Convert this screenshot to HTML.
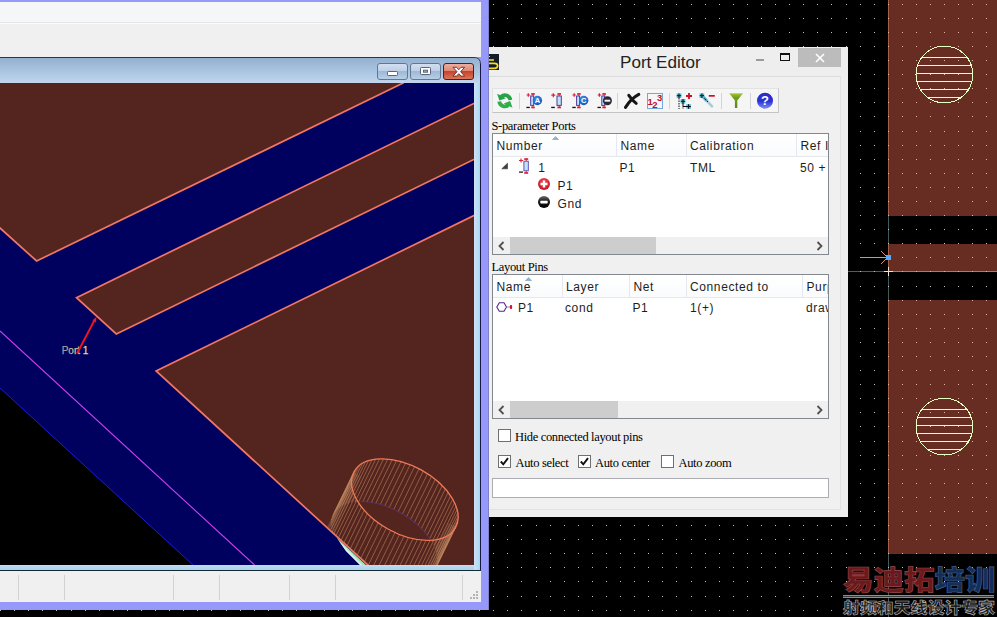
<!DOCTYPE html>
<html lang="en">
<head>
<meta charset="utf-8">
<title>Port Editor</title>
<style>
html,body{margin:0;padding:0;}
body{width:997px;height:617px;overflow:hidden;background:#000;position:relative;font-family:"Liberation Sans",sans-serif;}
.abs{position:absolute;}
#bg{position:absolute;left:0;top:0;width:997px;height:617px;}
/* ---------- left main window ---------- */
#mainwin{position:absolute;left:0;top:0;width:489px;height:610px;background:#9698fa;box-sizing:border-box;border-right:1px solid #7e80c8;}
#menubar{position:absolute;left:0;top:2px;width:481px;height:20px;background:#f5f6f7;}
#menuline{position:absolute;left:0;top:22px;width:481px;height:1px;background:#e6e6e6;}
#menuline2{position:absolute;left:0;top:23px;width:481px;height:1px;background:#fbfbfb;}
#toolarea{position:absolute;left:0;top:24px;width:481px;height:33px;background:#f0f0f0;}
#child{position:absolute;left:0;top:57px;width:481px;height:514px;background:#b4cfe8;border-top-right-radius:7px;}
#childtitle{position:absolute;left:0;top:58px;width:480px;height:25px;background:linear-gradient(#94b1cf 0%,#a6c2de 45%,#b6cfe9 80%,#c6d3ec 100%);border-top-right-radius:6px;}
#canvas{position:absolute;left:0;top:83px;width:474px;height:482px;}
#status{position:absolute;left:0;top:571px;width:481px;height:31px;background:#f0f0f0;}
.ssep{position:absolute;top:4px;width:1px;height:25px;background:#d2d2d2;}
/* ---------- port editor ---------- */
#pe{position:absolute;left:489px;top:47px;width:359px;height:470px;background:#eeeeee;}
.serif{font-family:"Liberation Serif","Noto Serif CJK TC",serif;font-size:12.5px;letter-spacing:-0.34px;color:#000;white-space:nowrap;}
.ui{font-family:"Liberation Sans",sans-serif;font-size:12px;letter-spacing:0.62px;color:#1e1e1e;white-space:nowrap;}
.list{position:absolute;background:#fff;border:1px solid #828790;box-sizing:border-box;overflow:hidden;}
.hsep{position:absolute;top:0;width:1px;height:22px;background:#e5e8ee;}
.cb{position:absolute;width:13px;height:13px;box-sizing:border-box;border:1px solid #707070;background:#fff;}
</style>
</head>
<body>
<!-- ================= layout background (right) ================= -->
<svg id="bg" width="997" height="617" viewBox="0 0 997 617" shape-rendering="crispEdges">
<defs><g id="dr"><rect x="0" width="1" height="1"/><rect x="14" width="1" height="1"/><rect x="28" width="1" height="1"/><rect x="42" width="1" height="1"/><rect x="56" width="1" height="1"/><rect x="71" width="1" height="1"/><rect x="85" width="1" height="1"/><rect x="99" width="1" height="1"/><rect x="113" width="1" height="1"/><rect x="127" width="1" height="1"/><rect x="141" width="1" height="1"/><rect x="155" width="1" height="1"/><rect x="169" width="1" height="1"/><rect x="183" width="1" height="1"/><rect x="197" width="1" height="1"/><rect x="211" width="1" height="1"/><rect x="226" width="1" height="1"/><rect x="240" width="1" height="1"/><rect x="254" width="1" height="1"/><rect x="268" width="1" height="1"/><rect x="282" width="1" height="1"/><rect x="296" width="1" height="1"/><rect x="310" width="1" height="1"/><rect x="324" width="1" height="1"/><rect x="338" width="1" height="1"/><rect x="352" width="1" height="1"/><rect x="366" width="1" height="1"/><rect x="381" width="1" height="1"/><rect x="395" width="1" height="1"/><rect x="409" width="1" height="1"/><rect x="423" width="1" height="1"/><rect x="437" width="1" height="1"/><rect x="451" width="1" height="1"/><rect x="465" width="1" height="1"/><rect x="479" width="1" height="1"/><rect x="493" width="1" height="1"/><rect x="507" width="1" height="1"/><rect x="521" width="1" height="1"/><rect x="536" width="1" height="1"/><rect x="550" width="1" height="1"/><rect x="564" width="1" height="1"/><rect x="578" width="1" height="1"/><rect x="592" width="1" height="1"/><rect x="606" width="1" height="1"/><rect x="620" width="1" height="1"/><rect x="634" width="1" height="1"/><rect x="648" width="1" height="1"/><rect x="662" width="1" height="1"/><rect x="676" width="1" height="1"/><rect x="691" width="1" height="1"/><rect x="705" width="1" height="1"/><rect x="719" width="1" height="1"/><rect x="733" width="1" height="1"/><rect x="747" width="1" height="1"/><rect x="761" width="1" height="1"/><rect x="775" width="1" height="1"/><rect x="789" width="1" height="1"/><rect x="803" width="1" height="1"/><rect x="817" width="1" height="1"/><rect x="831" width="1" height="1"/><rect x="846" width="1" height="1"/><rect x="860" width="1" height="1"/><rect x="874" width="1" height="1"/><rect x="888" width="1" height="1"/><rect x="902" width="1" height="1"/><rect x="916" width="1" height="1"/><rect x="930" width="1" height="1"/><rect x="944" width="1" height="1"/><rect x="958" width="1" height="1"/><rect x="972" width="1" height="1"/><rect x="986" width="1" height="1"/></g><g id="dg"><use href="#dr" y="4"/><use href="#dr" y="18"/><use href="#dr" y="32"/><use href="#dr" y="46"/><use href="#dr" y="60"/><use href="#dr" y="74"/><use href="#dr" y="88"/><use href="#dr" y="102"/><use href="#dr" y="116"/><use href="#dr" y="131"/><use href="#dr" y="145"/><use href="#dr" y="159"/><use href="#dr" y="173"/><use href="#dr" y="187"/><use href="#dr" y="201"/><use href="#dr" y="215"/><use href="#dr" y="229"/><use href="#dr" y="243"/><use href="#dr" y="257"/><use href="#dr" y="271"/><use href="#dr" y="286"/><use href="#dr" y="300"/><use href="#dr" y="314"/><use href="#dr" y="328"/><use href="#dr" y="342"/><use href="#dr" y="356"/><use href="#dr" y="370"/><use href="#dr" y="384"/><use href="#dr" y="398"/><use href="#dr" y="412"/><use href="#dr" y="426"/><use href="#dr" y="441"/><use href="#dr" y="455"/><use href="#dr" y="469"/><use href="#dr" y="483"/><use href="#dr" y="497"/><use href="#dr" y="511"/><use href="#dr" y="525"/><use href="#dr" y="539"/><use href="#dr" y="553"/><use href="#dr" y="567"/><use href="#dr" y="581"/><use href="#dr" y="596"/><use href="#dr" y="610"/></g></defs>
<rect x="0" y="0" width="997" height="617" fill="#000"/>
<rect x="888" y="0" width="1" height="617" fill="#425a58"/>
<rect x="489" y="271" width="508" height="1" fill="#46605c"/>
<g fill="#c6c6c6"><use href="#dg"/></g>
<g id="brown" fill="#672d22">
<rect x="888" y="0" width="109" height="216"/>
<rect x="888" y="244" width="109" height="28"/>
<rect x="888" y="300" width="109" height="254"/>
</g>
<clipPath id="cb"><rect x="888" y="0" width="109" height="216"/><rect x="888" y="244" width="109" height="28"/><rect x="888" y="300" width="109" height="254"/></clipPath>
<g clip-path="url(#cb)"><rect x="888" y="0" width="1" height="617" fill="#a5604c"/><rect x="888" y="271" width="109" height="1" fill="#b07868"/></g>
<g fill="#e2b6a6" clip-path="url(#cb)"><use href="#dg"/></g>
<!-- axes -->
<!-- origin cross -->
<rect x="884" y="271" width="9" height="1" fill="#f0e6dc"/><rect x="888" y="267" width="1" height="9" fill="#f0e0d0"/>
<!-- via circles -->
<g fill="none" stroke="#e6ffc2" stroke-width="1" shape-rendering="crispEdges">
<circle cx="944.4" cy="74.5" r="28.4"/>
<circle cx="944.4" cy="426.6" r="28.4"/>
</g>
<g fill="#e6ffc2">
<rect x="922" y="57" width="45" height="1"/><rect x="918" y="65" width="53" height="1"/><rect x="916" y="73" width="57" height="1"/><rect x="917" y="81" width="55" height="1"/><rect x="920" y="89" width="49" height="1"/><rect x="928" y="97" width="33" height="1"/>
<rect x="922" y="409" width="45" height="1"/><rect x="918" y="417" width="53" height="1"/><rect x="916" y="425" width="57" height="1"/><rect x="917" y="433" width="55" height="1"/><rect x="920" y="441" width="49" height="1"/><rect x="928" y="449" width="33" height="1"/>
</g>
<!-- port pin arrow -->
<g shape-rendering="auto">
<line x1="860" y1="257.5" x2="887" y2="257.5" stroke="#e2907a" stroke-width="1"/>
<line x1="881" y1="251" x2="887" y2="257" stroke="#e2907a" stroke-width="1"/>
<line x1="881" y1="264" x2="887" y2="258" stroke="#e2907a" stroke-width="1"/>
</g>
<rect x="886" y="255" width="5" height="5" fill="#55aaff"/>
</svg>

<!-- ================= main window (left) ================= -->
<div id="mainwin">
  <div id="menubar"></div><div id="menuline"></div><div id="menuline2"></div>
  <div id="toolarea"></div>
  <div id="child"></div>
  <div id="childtitle"></div>
  <svg id="canvas" width="474" height="482" viewBox="0 83 474 482">
    <rect x="0" y="83" width="474" height="482" fill="#00005f"/>
    <!-- ground / black corner -->
    <polygon points="0,388 193,565 0,565" fill="#000"/>
    <line x1="0" y1="388" x2="193" y2="565" stroke="#1c1cd8" stroke-width="1"/>
    <line x1="0" y1="331" x2="254.5" y2="565" stroke="#cf3ff0" stroke-width="1.1"/>
    <!-- copper polygons -->
    <g fill="#54251e" stroke="#f27664" stroke-width="1.7" stroke-linejoin="miter">
      <polygon points="-5,78 403.2,78 403.2,83 36.6,261 -5,223.5"/>
      <polygon points="480,100.4 76.5,297.7 116.3,334 480,156.5"/>
      <polygon points="480,212.6 156.1,371 369.500,566.5 480,566.5"/>
    </g>
    <clipPath id="cc"><polygon points="480,212.6 156.1,371 369.500,566.5 480,566.5"/></clipPath>
    <g clip-path="url(#cc)"><polygon points="456.0,526.7 426.8,586.6 418.7,582.7 447.9,522.8" fill="#b08a68" fill-opacity="0.12"/><polygon points="456.0,526.7 426.8,586.6 422.3,584.4 451.5,524.5" fill="#b08a68" fill-opacity="0.12"/><polygon points="456.0,526.7 426.8,586.6 424.6,585.5 453.7,525.6" fill="#b08a68" fill-opacity="0.10"/><polygon points="353.6,472.5 324.5,532.4 332.6,536.4 361.7,476.4" fill="#b08a68" fill-opacity="0.12"/><polygon points="353.6,472.5 324.5,532.4 329.0,534.6 358.1,474.7" fill="#b08a68" fill-opacity="0.12"/><polygon points="353.6,472.5 324.5,532.4 326.8,533.5 355.9,473.6" fill="#b08a68" fill-opacity="0.10"/><path d="M455.5 527.6l-20.8 42.8M453.9 530.0l-20.8 42.8M452.0 532.2l-20.8 42.8M449.7 534.2l-20.8 42.8M447.1 535.9l-20.8 42.8M444.2 537.3l-20.8 42.8M441.1 538.5l-20.8 42.8M437.6 539.4l-20.8 42.8M433.9 540.0l-20.8 42.8M430.1 540.3l-20.8 42.8M426.0 540.4l-20.8 42.8M421.8 540.1l-20.8 42.8M417.4 539.5l-20.8 42.8M413.0 538.7l-20.8 42.8M408.5 537.6l-20.8 42.8M404.0 536.2l-20.8 42.8M399.5 534.5l-20.8 42.8M395.0 532.6l-20.8 42.8M390.6 530.4l-20.8 42.8M386.3 528.1l-20.8 42.8M382.1 525.5l-20.8 42.8M378.1 522.7l-20.8 42.8M374.3 519.8l-20.8 42.8M370.7 516.7l-20.8 42.8M367.4 513.5l-20.8 42.8M364.3 510.2l-20.8 42.8M361.5 506.8l-20.8 42.8M359.0 503.4l-20.8 42.8M356.9 499.9l-20.8 42.8M355.1 496.5l-20.8 42.8M353.6 493.0l-20.8 42.8M352.6 489.6l-20.8 42.8M351.9 486.3l-20.8 42.8M351.5 483.1l-20.8 42.8M351.6 480.0l-20.8 42.8M352.1 477.0l-20.8 42.8M352.9 474.2l-20.8 42.8M354.1 471.6l-20.8 42.8M355.7 469.2l-20.8 42.8M357.6 467.0l-20.8 42.8M359.9 465.0l-20.8 42.8M362.5 463.3l-20.8 42.8M365.4 461.9l-20.8 42.8M368.5 460.7l-20.8 42.8M372.0 459.8l-20.8 42.8M375.7 459.2l-20.8 42.8M379.5 458.9l-20.8 42.8M383.6 458.8l-20.8 42.8M387.8 459.1l-20.8 42.8M392.2 459.7l-20.8 42.8M396.6 460.5l-20.8 42.8M401.1 461.6l-20.8 42.8M405.6 463.0l-20.8 42.8M410.1 464.7l-20.8 42.8M414.6 466.6l-20.8 42.8M419.0 468.8l-20.8 42.8M423.3 471.1l-20.8 42.8M427.5 473.7l-20.8 42.8M431.5 476.5l-20.8 42.8M435.3 479.4l-20.8 42.8M438.9 482.5l-20.8 42.8M442.2 485.7l-20.8 42.8M445.3 489.0l-20.8 42.8M448.1 492.4l-20.8 42.8M450.6 495.8l-20.8 42.8M452.7 499.3l-20.8 42.8M454.5 502.7l-20.8 42.8M456.0 506.2l-20.8 42.8M457.0 509.6l-20.8 42.8M457.7 512.9l-20.8 42.8M458.1 516.1l-20.8 42.8M458.0 519.2l-20.8 42.8M457.5 522.2l-20.8 42.8M456.7 525.0l-20.8 42.8" stroke="#c58a62" stroke-opacity="0.62" stroke-width="0.9" fill="none"/></g><clipPath id="ce"><ellipse cx="404.8" cy="499.6" rx="56.9" ry="32.9" transform="rotate(28.9 404.8 499.6)"/></clipPath><g clip-path="url(#ce)"><ellipse cx="384.0" cy="542.4" rx="57.9" ry="33.9" transform="rotate(28.9 384.0 542.4)" fill="none" stroke="#5a3a96" stroke-opacity="0.5" stroke-width="1"/></g><polygon points="336.5,537.5 367,566 361,566 346,551" fill="#a8e4b4"/><polygon points="339,541 363,566 361,566 346,551" fill="#e4f2ec"/><ellipse cx="404.8" cy="499.6" rx="57.9" ry="33.9" transform="rotate(28.9 404.8 499.6)" fill="none" stroke="#f07858" stroke-width="1.3"/>
    <!-- port arrow + label -->
    <defs><linearGradient id="pg" x1="0" y1="0" x2="1" y2="0"><stop offset="0" stop-color="#8f90a6"/><stop offset="0.45" stop-color="#c4c49a"/><stop offset="1" stop-color="#eaea86"/></linearGradient></defs>
    <text x="61.700" y="354.300" font-family="Liberation Sans, sans-serif" font-size="10" fill="url(#pg)" stroke="url(#pg)" stroke-width="0.250">Port 1</text>
    <line x1="77" y1="353.500" x2="95" y2="319.200" stroke="#f01424" stroke-width="1.900"/>
    <polygon points="96.500,316.800 92.400,320.500 96,322.600" fill="#f01424"/>
  </svg>
  <div id="childdark" class="abs" style="left:0;top:57px;width:474px;height:1px;background:#2e3440;"></div>
  <svg class="abs" style="left:370px;top:57px;" width="112" height="30" viewBox="370 57 112 30">
    <defs>
      <linearGradient id="gb" x1="0" y1="0" x2="0" y2="1"><stop offset="0" stop-color="#d3e1f1"/><stop offset="0.48" stop-color="#bccfe6"/><stop offset="0.5" stop-color="#9fb8d6"/><stop offset="1" stop-color="#b9d0e8"/></linearGradient>
      <linearGradient id="gr" x1="0" y1="0" x2="0" y2="1"><stop offset="0" stop-color="#eeb0a2"/><stop offset="0.48" stop-color="#dc8672"/><stop offset="0.5" stop-color="#c7432b"/><stop offset="1" stop-color="#dd7a5e"/></linearGradient>
    </defs>
    <path d="M474 57.5 Q480.5 57.5 480.5 64 L480.5 87" fill="none" stroke="#2e3440" stroke-width="1"/>
    <rect x="377.500" y="63.500" width="30" height="16" rx="2.500" fill="url(#gb)" stroke="#64768f"/>
    <rect x="410.500" y="63.500" width="30" height="16" rx="2.500" fill="url(#gb)" stroke="#64768f"/>
    <rect x="443.500" y="63.500" width="30" height="16" rx="2.500" fill="url(#gr)" stroke="#4a2024"/>
    <rect x="387.500" y="71.500" width="10" height="4" rx="0.800" fill="#fff" stroke="#5a6478"/>
    <rect x="420.500" y="67.500" width="10" height="7" rx="0.800" fill="#fff" stroke="#5a6478"/><rect x="423.500" y="70.200" width="4" height="2" fill="#9fb4d0" stroke="#5a6478"/>
    <path d="M453 67.300 l3.600 0 l2.200 2.400 l2.200 -2.400 l3.600 0 l-4 4.400 l4 4.400 l-3.600 0 l-2.200 -2.400 l-2.200 2.400 l-3.600 0 l4 -4.400 z" fill="#fff" stroke="#5c2c2c" stroke-width="0.900"/>
  </svg>
  <div class="abs" style="left:0;top:565px;width:480px;height:5px;background:linear-gradient(#c4dcf2,#b4d4ee 60%,#a4d8f2);"></div>
  <div class="abs" style="left:474px;top:83px;width:6px;height:487px;background:linear-gradient(to right,#d0e0f6,#c2dcf2 50%,#98dcf8);"></div>
  
  <div class="abs" style="left:480px;top:64px;width:1px;height:507px;background:#181844;"></div>
  <div class="abs" style="left:0;top:570px;width:481px;height:1px;background:#102a36;"></div>
  <div id="status">
    <div class="ssep" style="left:18px"></div><div class="ssep" style="left:64px"></div><div class="ssep" style="left:173px"></div><div class="ssep" style="left:219px"></div><div class="ssep" style="left:289px"></div><div class="ssep" style="left:335px"></div><div class="ssep" style="left:462px"></div>
    <svg class="abs" style="left:468px;top:18px" width="12" height="12" shape-rendering="crispEdges"><g fill="#b4b4b4"><rect x="8" y="2" width="2" height="2"/><rect x="5" y="5" width="2" height="2"/><rect x="8" y="5" width="2" height="2"/><rect x="2" y="8" width="2" height="2"/><rect x="5" y="8" width="2" height="2"/><rect x="8" y="8" width="2" height="2"/></g></svg>
  </div>
</div>

<!-- ================= Port Editor ================= -->
<div id="pe">
  <!-- title bar -->
  <svg class="abs" style="left:0;top:7px" width="10" height="16" viewBox="0 0 10 16">
    <rect width="10" height="16" fill="#161c28"/>
    <path d="M0 6 H5" stroke="#f4dc28" stroke-width="1.6" fill="none"/>
    <path d="M0 9.300 H5.500 Q8.600 9.300 8.600 11.800 Q8.600 14.300 5.500 14.300 H0" stroke="#f4dc28" stroke-width="1.7" fill="none"/>
    <rect x="0" y="2" width="1" height="1" fill="#f4dc28"/>
  </svg>
  <div id="petitle" class="abs" style="left:131px;top:5px;font-size:17.1px;line-height:22px;color:#222222;white-space:nowrap;">Port Editor</div>
  <div class="abs" style="left:267px;top:12px;width:8px;height:2px;background:#9b9b9b;"></div>
  <div class="abs" style="left:291px;top:6px;width:10px;height:8px;box-sizing:border-box;border:1px solid #111;border-top-width:2px;"></div>
  <div class="abs" style="left:309px;top:1px;width:43px;height:19px;background:#bcbcbc;"></div>
  <svg class="abs" style="left:326px;top:6px" width="10" height="10" viewBox="0 0 10 10"><path d="M1 1 L9 9 M9 1 L1 9" stroke="#fff" stroke-width="1.6" fill="none"/></svg>
  <div class="abs" style="left:0;top:29px;width:352px;height:1px;background:#dcdcdc;"></div>
  <!-- client -->
  <div id="client" class="abs" style="left:0;top:30px;width:351px;height:432px;background:#f0f0f0;border-right:1px solid #e2e2e2;border-bottom:1px solid #e2e2e2;"></div>
  <!-- toolbar -->
  <div id="tb" class="abs" style="left:3px;top:41px;width:287px;height:25px;box-sizing:border-box;background:#f5f5f5;border:1px solid #e3e3e3;border-right-color:#c9c9c9;border-bottom-color:#c4c4c4;"></div>
  <svg class="abs" style="left:3px;top:41px" width="287" height="25" viewBox="492 88 287 25">
    <defs>
      <g id="pt"><!-- port symbol, origin at rect centre -->
        <rect x="-2" y="-4.700" width="4.300" height="9.400" fill="#c4e2f8" stroke="#4b3a9c" stroke-width="1"/>
        <rect x="-1.600" y="-7.600" width="3.600" height="1.700" fill="#d8203c"/><rect x="-0.300" y="-6.500" width="1" height="1.800" fill="#d8203c"/>
        <rect x="-1.600" y="5.900" width="3.600" height="1.700" fill="#d8203c"/><rect x="-0.300" y="4.700" width="1" height="1.800" fill="#d8203c"/>
        <path d="M-7.700 -5.500 H-3.700 M-5.700 -7.500 V-3.500" stroke="#d8203c" stroke-width="1.200"/>
        <rect x="-7.800" y="6.100" width="3.600" height="1.300" fill="#111"/>
      </g>
      <g id="pn">
        <rect x="-1.500" y="-4.700" width="3" height="9.400" fill="#c4e2f8" stroke="#4b3a9c" stroke-width="1"/>
        <rect x="-1" y="-7.600" width="3.600" height="1.700" fill="#d8203c"/><rect x="0.300" y="-6.500" width="1" height="1.800" fill="#d8203c"/>
        <rect x="-1" y="5.900" width="3.600" height="1.700" fill="#d8203c"/><rect x="0.300" y="4.700" width="1" height="1.800" fill="#d8203c"/>
        <path d="M-5.600 -5.700 H-2.200 M-3.900 -7.400 V-4" stroke="#d8203c" stroke-width="1.200"/>
        <rect x="-5.800" y="6.100" width="3.400" height="1.300" fill="#111"/>
      </g>
      <radialGradient id="bl" cx="0.400" cy="0.300" r="0.800"><stop offset="0" stop-color="#3f8fe8"/><stop offset="1" stop-color="#0a4fb4"/></radialGradient>
      <linearGradient id="hp" x1="0" y1="0" x2="0" y2="1"><stop offset="0" stop-color="#2a2ac8"/><stop offset="0.550" stop-color="#2c34d6"/><stop offset="1" stop-color="#7f92f4"/></linearGradient>
      <linearGradient id="fn" x1="0" y1="0" x2="0" y2="1"><stop offset="0" stop-color="#a6c82a"/><stop offset="0.300" stop-color="#6f9e1c"/><stop offset="1" stop-color="#5a8a18"/></linearGradient>
    </defs>
    <!-- refresh -->
    <path d="M512.23 99.76 A7.50 7.50 0 0 0 500.18 94.89 L502.52 97.88 A3.70 3.70 0 0 1 508.46 100.29 Z M497.1 93.8 L499.4 100.6 L505.9 98.2 Z" fill="#27a244"/>
    <g transform="rotate(180 504.80 100.80)"><path d="M512.23 99.76 A7.50 7.50 0 0 0 500.18 94.89 L502.52 97.88 A3.70 3.70 0 0 1 508.46 100.29 Z M497.1 93.8 L499.4 100.6 L505.9 98.2 Z" fill="#2fae4c"/></g>
    <!-- separators -->
    <g fill="#d4d4d4"><rect x="519" y="93" width="1" height="16"/><rect x="617" y="93" width="1" height="16"/><rect x="669" y="93" width="1" height="16"/><rect x="721" y="93" width="1" height="16"/><rect x="750" y="93" width="1" height="16"/></g>
    <!-- port icons -->
    <use href="#pn" x="532.200" y="100.700"/>
    <circle cx="537.400" cy="100.500" r="4.700" fill="url(#bl)"/>
    <text x="537.400" y="103.200" font-family="Liberation Sans, sans-serif" font-size="7.500" font-weight="bold" fill="#fff" text-anchor="middle">A</text>
    <use href="#pt" x="559" y="100.700"/>
    <use href="#pn" x="578.100" y="100.700"/>
    <circle cx="583.700" cy="100.500" r="4.700" fill="url(#bl)"/>
    <text x="583.800" y="103.200" font-family="Liberation Sans, sans-serif" font-size="7.500" font-weight="bold" fill="#fff" text-anchor="middle">C</text>
    <use href="#pn" x="603.300" y="100.700"/>
    <circle cx="607.400" cy="100.700" r="4.500" fill="#2a2a34"/><rect x="604.600" y="99.700" width="5.600" height="2" fill="#f4f4f4"/>
    <!-- delete X -->
    <path d="M625.500 107.400 Q631 98.500 638.800 94.400" stroke="#151515" stroke-width="3" stroke-linecap="round" fill="none"/>
    <path d="M628.800 95.300 Q632 100 636.200 103.400" stroke="#151515" stroke-width="3" stroke-linecap="round" fill="none"/>
    <!-- 123 -->
    <rect x="647.500" y="93.500" width="15" height="15" fill="#f6f6f6" stroke="#73a8dc" stroke-width="1"/>
    <g font-family="Liberation Sans, sans-serif" font-weight="bold" fill="#c40c28" font-size="9.500">
      <text x="647.600" y="105">1</text><text x="652.200" y="108">2</text><text x="657" y="101">3</text>
    </g>
    <!-- tree + -->
    <g fill="#4fc0dc"><rect x="676.700" y="93.400" width="4.600" height="4.600"/><rect x="680.700" y="99" width="4.600" height="4.600"/><rect x="686.300" y="104.200" width="4.600" height="4.600"/></g>
    <g stroke="#0a0a14" stroke-width="1" fill="none">
      <path d="M679 93.500 V98 M676.800 95.700 H681.200 M683 99 V104 M680.800 101.300 H685.200 M688.600 104.200 V108.800 M686.400 106.500 H690.800"/>
      <path d="M679 98 V109" stroke-dasharray="1.500 1"/><path d="M683 103.500 V106.500 H687"/><path d="M683 106.500 V109" stroke-dasharray="1 1"/>
    </g>
    <path d="M686 96 H692 M689 93 V99" stroke="#c8102c" stroke-width="1.800"/>
    <!-- tree - -->
    <path d="M702 95.700 L712 106.300" stroke="#9cc4d0" stroke-width="2.600" stroke-linecap="round" opacity="0.850"/>
    <path d="M702 95.700 L707 101" stroke="#3fb4d4" stroke-width="2.800"/>
    <rect x="699.600" y="93.400" width="4.600" height="4.600" fill="#4fc0dc"/>
    <path d="M701.900 93.500 V98 M699.700 95.700 H704.100" stroke="#0a0a14" stroke-width="1"/>
    <path d="M704.400 98.300 l1.600 1.600 M706.800 100.800 l1.200 1.200" stroke="#0a0a14" stroke-width="0.900"/>
    <rect x="708.800" y="95" width="6" height="1.700" fill="#c8102c"/>
    <!-- funnel -->
    <path d="M729.200 93.200 H743 L737.300 100.400 V108 H734.900 V100.400 Z" fill="url(#fn)"/>
    <path d="M729.700 93.600 H742.500" stroke="#c4dc5a" stroke-width="0.800"/>
    <!-- help -->
    <circle cx="765" cy="100.700" r="8" fill="url(#hp)"/>
    <text x="765" y="105.300" font-family="Liberation Sans, sans-serif" font-size="13" font-weight="bold" fill="#fff" text-anchor="middle">?</text>
  </svg>
  <!-- S-parameter ports -->
  <div id="lab1" class="abs serif" style="left:2.5px;top:71.5px;line-height:14px;">S-parameter Ports</div>
  <div id="list1" class="list" style="left:3px;top:86px;width:337px;height:122px;">
    <div class="abs" style="left:0;top:0;width:335px;height:22px;background:linear-gradient(#ffffff,#fafbfd);border-bottom:1px solid #e6e8ec;"></div>
    <div class="hsep" style="left:123px"></div><div class="hsep" style="left:193px"></div><div class="hsep" style="left:303px"></div>
    <svg class="abs" style="left:59px;top:1.500px" width="7" height="4" viewBox="0 0 7 4"><path d="M0.300 3.800 L3.500 0.400 L6.700 3.800 Z" fill="#8fb4c4" stroke="#6f9fb4" stroke-width="0.500"/></svg>
    <div class="abs ui" style="left:3.5px;top:3.8px;line-height:16px;">Number</div>
    <div class="abs ui" style="left:127.5px;top:3.8px;line-height:16px;">Name</div>
    <div class="abs ui" style="left:197px;top:3.8px;line-height:16px;">Calibration</div>
    <div class="abs ui" style="left:307.5px;top:3.8px;line-height:16px;">Ref Impedance</div>
    <!-- row 1 -->
    <svg class="abs" style="left:8px;top:28px" width="8" height="8" viewBox="0 0 8 8"><path d="M0.800 6.800 L6.500 6.800 L6.500 1.200 Z" fill="#404040" stroke="#303030" stroke-width="0.6"/></svg>
    <svg class="abs" style="left:23px;top:23px" width="16" height="18" viewBox="0 0 16 18">
      <rect x="7.900" y="4.200" width="4.400" height="9.600" fill="#c2e2f8" stroke="#5444ac" stroke-width="0.900"/>
      <rect x="8.200" y="1.200" width="4" height="1.700" fill="#d8203c"/><rect x="9.700" y="2" width="1" height="2" fill="#d8203c"/>
      <rect x="8.200" y="15.100" width="4" height="1.700" fill="#d8203c"/><rect x="9.700" y="14" width="1" height="2" fill="#d8203c"/>
      <path d="M3 3.500 H7 M5 1.500 V5.500" stroke="#d8203c" stroke-width="1.100"/>
      <rect x="3" y="14.500" width="4" height="1.200" fill="#111"/>
    </svg>
    <div class="abs ui" style="left:45.2px;top:25.8px;line-height:16px;">1</div>
    <div class="abs ui" style="left:126.5px;top:25.8px;line-height:16px;">P1</div>
    <div class="abs ui" style="left:197px;top:25.8px;line-height:16px;">TML</div>
    <div class="abs ui" style="left:307px;top:25.8px;line-height:16px;">50 + 0j</div>
    <!-- row 2 -->
    <svg class="abs" style="left:44px;top:43px" width="14" height="14" viewBox="0 0 14 14">
      <defs><radialGradient id="rg1" cx="0.5" cy="0.300" r="0.700"><stop offset="0" stop-color="#ee4a52"/><stop offset="1" stop-color="#c41424"/></radialGradient></defs>
      <circle cx="7" cy="7" r="6" fill="url(#rg1)"/><path d="M3.500 7 H10.500 M7 3.500 V10.500" stroke="#fff" stroke-width="2.400"/></svg>
    <div class="abs ui" style="left:64.5px;top:43.8px;line-height:16px;">P1</div>
    <!-- row 3 -->
    <svg class="abs" style="left:44px;top:61px" width="14" height="14" viewBox="0 0 14 14">
      <defs><linearGradient id="lg2" x1="0" y1="0" x2="0" y2="1"><stop offset="0" stop-color="#6a6a6a"/><stop offset="0.450" stop-color="#1a1a1a"/><stop offset="1" stop-color="#000"/></linearGradient></defs>
      <circle cx="7" cy="7" r="6" fill="url(#lg2)"/><rect x="3.300" y="5.800" width="7.400" height="2.600" rx="0.600" fill="#fff"/></svg>
    <div class="abs ui" style="left:64.5px;top:61.8px;line-height:16px;">Gnd</div>
    <!-- scrollbar -->
    <div class="abs" style="left:0;top:103px;width:335px;height:17px;background:#f0f0f0;"></div>
    <div class="abs" style="left:17px;top:103px;width:146px;height:17px;background:#cdcdcd;"></div>
    <svg class="abs" style="left:4px;top:107px" width="9" height="10" viewBox="0 0 9 10"><path d="M6.500 1 L2.500 5 L6.500 9" stroke="#505050" stroke-width="1.800" fill="none"/></svg>
    <svg class="abs" style="left:322px;top:107px" width="9" height="10" viewBox="0 0 9 10"><path d="M2.500 1 L6.500 5 L2.500 9" stroke="#505050" stroke-width="1.800" fill="none"/></svg>
  </div>
  <!-- Layout pins -->
  <div id="lab2" class="abs serif" style="left:2.500px;top:212.5px;line-height:14px;">Layout Pins</div>
  <div id="list2" class="list" style="left:3px;top:227px;width:337px;height:145px;">
    <div class="abs" style="left:0;top:0;width:335px;height:22px;background:linear-gradient(#ffffff,#fafbfd);border-bottom:1px solid #e6e8ec;"></div>
    <div class="hsep" style="left:69px"></div><div class="hsep" style="left:136px"></div><div class="hsep" style="left:193px"></div><div class="hsep" style="left:309px"></div>
    <svg class="abs" style="left:32px;top:1.500px" width="7" height="4" viewBox="0 0 7 4"><path d="M0.300 3.800 L3.500 0.400 L6.700 3.800 Z" fill="#8fb4c4" stroke="#6f9fb4" stroke-width="0.500"/></svg>
    <div class="abs ui" style="left:3.5px;top:3.8px;line-height:16px;">Name</div>
    <div class="abs ui" style="left:73px;top:3.8px;line-height:16px;">Layer</div>
    <div class="abs ui" style="left:140.5px;top:3.8px;line-height:16px;">Net</div>
    <div class="abs ui" style="left:197px;top:3.8px;line-height:16px;">Connected to</div>
    <div class="abs ui" style="left:313.5px;top:3.8px;line-height:16px;">Purpose</div>
    <svg class="abs" style="left:3px;top:26px" width="18" height="12" viewBox="0 0 18 12">
      <path d="M0.800 6 L3.300 1.700 H8 L10.500 6 L8 10.300 H3.300 Z" fill="#fff" stroke="#52288a" stroke-width="1.100"/>
      <path d="M10.800 6 H14.500" stroke="#c49ad0" stroke-width="1.300"/><rect x="13.900" y="4" width="2.200" height="4" rx="0.800" fill="#cc1830"/></svg>
    <div class="abs ui" style="left:25px;top:24.8px;line-height:16px;">P1</div>
    <div class="abs ui" style="left:72px;top:24.8px;line-height:16px;">cond</div>
    <div class="abs ui" style="left:139.5px;top:24.8px;line-height:16px;">P1</div>
    <div class="abs ui" style="left:197px;top:24.8px;line-height:16px;">1(+)</div>
    <div class="abs ui" style="left:313px;top:24.8px;line-height:16px;">drawing</div>
    <div class="abs" style="left:0;top:126px;width:335px;height:17px;background:#f0f0f0;"></div>
    <div class="abs" style="left:17px;top:126px;width:108px;height:17px;background:#cdcdcd;"></div>
    <svg class="abs" style="left:4px;top:130px" width="9" height="10" viewBox="0 0 9 10"><path d="M6.500 1 L2.500 5 L6.500 9" stroke="#505050" stroke-width="1.800" fill="none"/></svg>
    <svg class="abs" style="left:322px;top:130px" width="9" height="10" viewBox="0 0 9 10"><path d="M2.500 1 L6.500 5 L2.500 9" stroke="#505050" stroke-width="1.800" fill="none"/></svg>
  </div>
  <!-- check boxes -->
  <div class="cb" style="left:9px;top:382px;"></div>
  <div id="lab3" class="abs serif" style="left:26px;top:382.5px;line-height:14px;">Hide connected layout pins</div>
  <div class="cb" style="left:9px;top:408px;"></div>
  <svg class="abs" style="left:9px;top:408px" width="13" height="13" viewBox="0 0 13 13"><path d="M2.800 6.500 L5.300 9.300 L10 3.200" stroke="#111" stroke-width="1.900" fill="none"/></svg>
  <div id="lab4" class="abs serif" style="left:26.5px;top:408.5px;line-height:14px;">Auto select</div>
  <div class="cb" style="left:89px;top:408px;"></div>
  <svg class="abs" style="left:89px;top:408px" width="13" height="13" viewBox="0 0 13 13"><path d="M2.800 6.500 L5.300 9.300 L10 3.200" stroke="#111" stroke-width="1.900" fill="none"/></svg>
  <div id="lab5" class="abs serif" style="left:106px;top:408.5px;line-height:14px;">Auto center</div>
  <div class="cb" style="left:172px;top:408px;"></div>
  <div id="lab6" class="abs serif" style="left:189.5px;top:408.5px;line-height:14px;">Auto zoom</div>
  <div class="abs" style="left:3px;top:431px;width:337px;height:20px;box-sizing:border-box;background:#fff;border:1px solid #abadb3;"></div>
</div>
<!-- ================= watermark ================= -->
<div id="wm" class="abs" style="left:842px;top:562px;width:155px;height:55px;overflow:hidden;">
  <div id="wm1" class="abs" style="left:1px;top:3.200px;font-family:'Liberation Sans','Noto Sans CJK SC',sans-serif;font-weight:900;font-size:30.500px;line-height:34px;white-space:nowrap;letter-spacing:0px;transform:scale(1,0.9);transform-origin:0 0;"><span style="color:#6c181c;-webkit-text-stroke:0.7px #94494a">易迪拓</span><span style="color:#122e5a;-webkit-text-stroke:0.7px #46608a">培训</span></div>
  <div class="abs" style="left:0.500px;top:33px;width:151.500px;height:3px;box-sizing:border-box;background:#3a3a3a;border:1px solid #8e8e8e;border-left:0;border-right:0;"></div>
  <div id="wm2" class="abs" style="left:1px;top:38.300px;transform:scale(1,0.86);transform-origin:0 0;font-family:'Liberation Sans','Noto Sans CJK SC',sans-serif;font-weight:900;font-size:16.900px;line-height:20px;white-space:nowrap;color:#1c1c1c;-webkit-text-stroke:0.650px #b4b4b4;">射频和天线设计专家</div>
</div>
</body>
</html>
